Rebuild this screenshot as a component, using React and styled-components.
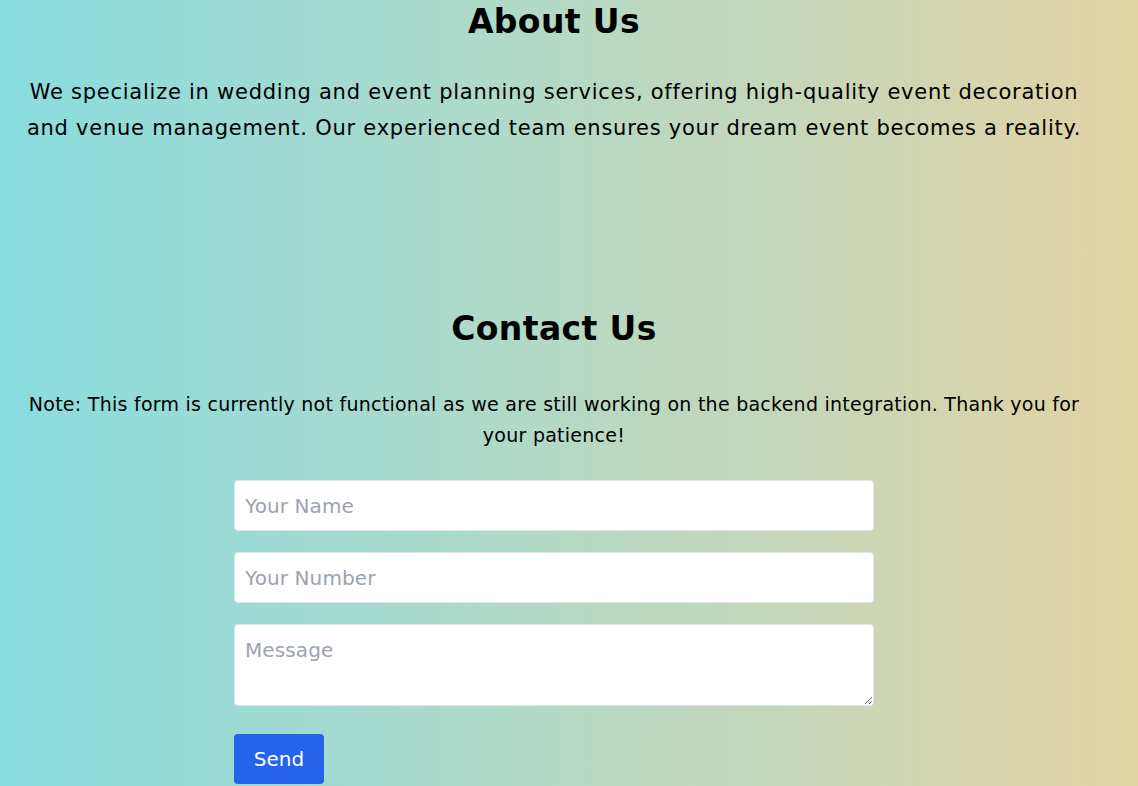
import React from "react";
import styled, { createGlobalStyle } from "styled-components";

const Global = createGlobalStyle`
  html, body { margin: 0; padding: 0; }
  body {
    font-family: "DejaVu Sans", "Liberation Sans", sans-serif;
    color: #000;
    background: linear-gradient(to right, #89dce0 0%, #b5d9c5 50%, #e2d3a5 100%);
    min-height: 100vh;
  }
  * { box-sizing: border-box; }
`;

const Page = styled.main`
  min-height: 786px;
  padding: 2px 38px 0 8px;
  background: linear-gradient(to right, #89dce0 0%, #b5d9c5 50%, #e2d3a5 100%);
`;

const Section = styled.section`
  display: flex;
  flex-direction: column;
  align-items: center;
  text-align: center;
  padding-top: ${(p) => p.$top || 0}px;
`;

const Heading = styled.h2`
  margin: 0;
  font-size: 33px;
  line-height: 40px;
  font-weight: 700;
  letter-spacing: 0.4px;
`;

const Lead = styled.p`
  margin: ${(p) => p.$mt || 0}px 0 0;
  font-size: ${(p) => p.$size || 20}px;
  line-height: ${(p) => p.$lh || 36}px;
  letter-spacing: ${(p) => p.$ls || 0}px;
  max-width: ${(p) => p.$max || 1070}px;
`;

const Form = styled.form`
  width: 640px;
  margin-top: ${(p) => p.$mt || 28}px;
  display: flex;
  flex-direction: column;
  align-items: flex-start;
  gap: 21px;
`;

const Field = styled.input`
  display: block;
  width: 100%;
  height: 51px;
  padding: 0 10px;
  font: inherit;
  font-size: 20px;
  letter-spacing: 0.1px;
  color: #111;
  background: #fff;
  border: 1px solid #e2e5e9;
  border-radius: 4px;
  outline: none;
  &::placeholder { color: #9ca3af; }
`;

const Area = styled.textarea`
  display: block;
  width: 100%;
  height: 82px;
  padding: 12px 10px;
  font: inherit;
  font-size: 20px;
  letter-spacing: 0.1px;
  line-height: 26px;
  color: #111;
  background: #fff;
  border: 1px solid #e2e5e9;
  border-radius: 4px;
  outline: none;
  resize: vertical;
  &::placeholder { color: #9ca3af; }
`;

const Button = styled.button`
  margin-top: 7px;
  width: 90px;
  height: 50px;
  border: none;
  border-radius: 4px;
  background: #2563eb;
  color: #fff;
  font: inherit;
  font-size: 20px;
  cursor: pointer;
`;

export default function App() {
  return (
    <>
      <Global />
      <Page>
        <Section>
          <Heading>About Us</Heading>
          <Lead $mt={32} $size={21} $ls={0.75} $max={1075}>
            We specialize in wedding and event planning services, offering high-quality event decoration and venue management. Our experienced team ensures your dream event becomes a reality.
          </Lead>
        </Section>
        <Section $top={163}>
          <Heading>Contact Us</Heading>
          <Lead $mt={40} $size={19} $lh={31} $ls={0.26} $max={1070}>
            Note: This form is currently not functional as we are still working on the backend integration. Thank you for your patience!
          </Lead>
          <Form $mt={29} onSubmit={(e) => e.preventDefault()}>
            <Field type="text" placeholder="Your Name" />
            <Field type="text" placeholder="Your Number" />
            <Area placeholder="Message" />
            <Button type="submit">Send</Button>
          </Form>
        </Section>
      </Page>
    </>
  );
}
